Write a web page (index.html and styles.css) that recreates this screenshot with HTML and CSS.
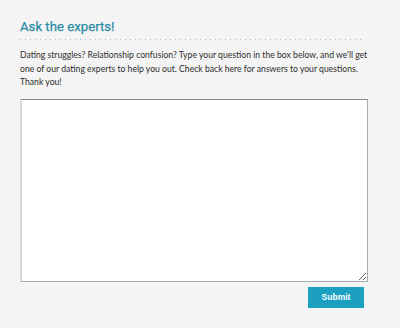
FILE: index.html
```html
<!DOCTYPE html>
<html>
<head>
    <meta charset="UTF-8">
    <meta name="viewport" content="width=device-width, initial-scale=1.0">
    <title>Ask the experts</title>
    <link rel="stylesheet" href="styles.css">
</head>
<body>
    <div class="ask-box">
        <h1 class="ask-title">Ask the experts!</h1>
        <div class="ask-rule"></div>
        <p class="ask-intro">Dating struggles? Relationship confusion? Type your question in the box below, and we'll get one of our dating experts to help you out. Check back here for answers to your questions. Thank you!</p>

        <form class="ask-form">
            <textarea class="ask-input"></textarea>
            <div class="ask-actions">
                <button type="button" class="ask-submit">Submit</button>
            </div>
        </form>
    </div>
</body>
</html>
```

FILE: styles.css
```css
body {
    margin: 0;
    background-color: #f4f4f4;
    font-family: "Lato", "Liberation Sans", Arial, sans-serif;
    color: #333;
}

.ask-box {
    width: 348px;
    padding: 19px 0 0 20px;
}

.ask-title {
    margin: 0;
    font-family: Roboto, "Liberation Sans", Arial, sans-serif;
    font-size: 13.2px;
    font-weight: normal;
    line-height: 16px;
    -webkit-text-stroke: 0.25px #2a8ca6;
    color: #2a8ca6;
}

.ask-rule {
    width: 342px;
    height: 1px;
    margin-top: 4px;
    background-image: repeating-linear-gradient(to right, #8cc3d2 0 1px, transparent 1px 5px);
}

.ask-intro {
    margin: 8px 0 0;
    font-size: 8.65px;
    line-height: 13.5px;
    color: #2e2e2e;
}

.ask-form {
    margin-top: 10px;
}

.ask-input {
    display: block;
    box-sizing: border-box;
    width: 348px;
    height: 183px;
    margin: 0;
    padding: 4px;
    background: #fff;
    border-style: solid;
    border-width: 1px 1px 1px 2px;
    border-color: #8c8c8c #aaaaaa #aaaaaa #d6d6d6;
    resize: vertical;
}

.ask-actions {
    display: flex;
    justify-content: flex-end;
    padding: 5px 4px 0 0;
}

.ask-submit {
    width: 56px;
    height: 21px;
    padding: 0;
    border: none;
    border-radius: 0;
    background-color: #1ba0c2;
    color: #fff;
    font-family: "Liberation Sans", Arial, sans-serif;
    font-size: 8.5px;
    font-weight: bold;
    cursor: pointer;
}
```
